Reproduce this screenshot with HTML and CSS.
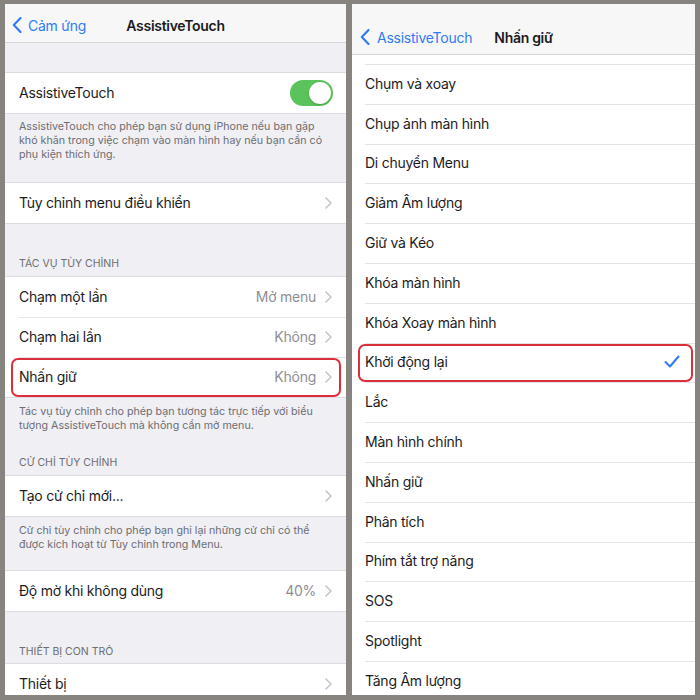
FILE: index.html
```html
<!DOCTYPE html>
<html lang="vi">
<head>
<meta charset="utf-8">
<title>AssistiveTouch</title>
<link rel="stylesheet" href="styles.css">
</head>
<body>
<div class="frame">
  <section class="panel left">
    <header class="nav nav-left">
      <div class="back">
        <svg class="back-chev" width="10" height="16" viewBox="0 0 10 16"><path d="M8.5 1 L1.8 8 L8.5 15" fill="none" stroke="#2f7bf5" stroke-width="2.1" stroke-linecap="round" stroke-linejoin="round"/></svg>
        <span>Cảm ứng</span>
      </div>
      <div class="title">AssistiveTouch</div>
      <div></div>
    </header>
    <div class="gap-top"></div>
    <div class="group">
      <div class="row"><div class="row-inner">
        <span class="label">AssistiveTouch</span>
        <span class="toggle"><span class="knob"></span></span>
      </div></div>
    </div>
    <div class="footer f1">AssistiveTouch cho phép bạn sử dụng iPhone nếu bạn gặp khó khăn trong việc chạm vào màn hình hay nếu bạn cần có phụ kiện thích ứng.</div>
    <div class="group">
      <div class="row"><div class="row-inner">
        <span class="label">Tùy chỉnh menu điều khiển</span>
        <svg class="chev" width="7" height="12" viewBox="0 0 7 12"><path d="M1 1 L6 6 L1 11" fill="none" stroke="#c4c4c8" stroke-width="1.5" stroke-linecap="round" stroke-linejoin="round"/></svg>
      </div></div>
    </div>
    <div class="header h1">TÁC VỤ TÙY CHỈNH</div>
    <div class="group">
      <div class="row"><div class="row-inner">
        <span class="label">Chạm một lần</span>
        <span class="value">Mở menu</span>
        <svg class="chev" width="7" height="12" viewBox="0 0 7 12"><path d="M1 1 L6 6 L1 11" fill="none" stroke="#c4c4c8" stroke-width="1.5" stroke-linecap="round" stroke-linejoin="round"/></svg>
      </div></div>
      <div class="row"><div class="row-inner">
        <span class="label">Chạm hai lần</span>
        <span class="value">Không</span>
        <svg class="chev" width="7" height="12" viewBox="0 0 7 12"><path d="M1 1 L6 6 L1 11" fill="none" stroke="#c4c4c8" stroke-width="1.5" stroke-linecap="round" stroke-linejoin="round"/></svg>
      </div></div>
      <div class="row marked mark-left"><div class="row-inner">
        <span class="label">Nhấn giữ</span>
        <span class="value">Không</span>
        <svg class="chev" width="7" height="12" viewBox="0 0 7 12"><path d="M1 1 L6 6 L1 11" fill="none" stroke="#c4c4c8" stroke-width="1.5" stroke-linecap="round" stroke-linejoin="round"/></svg>
      </div></div>
    </div>
    <div class="footer f2">Tác vụ tùy chỉnh cho phép bạn tương tác trực tiếp với biểu tượng AssistiveTouch mà không cần mở menu.</div>
    <div class="header h2">CỬ CHỈ TÙY CHỈNH</div>
    <div class="group">
      <div class="row"><div class="row-inner">
        <span class="label">Tạo cử chỉ mới...</span>
        <svg class="chev" width="7" height="12" viewBox="0 0 7 12"><path d="M1 1 L6 6 L1 11" fill="none" stroke="#c4c4c8" stroke-width="1.5" stroke-linecap="round" stroke-linejoin="round"/></svg>
      </div></div>
    </div>
    <div class="footer f3">Cử chỉ tùy chỉnh cho phép bạn ghi lại những cử chỉ có thể được kích hoạt từ Tùy chỉnh trong Menu.</div>
    <div class="group">
      <div class="row"><div class="row-inner">
        <span class="label">Độ mờ khi không dùng</span>
        <span class="value">40%</span>
        <svg class="chev" width="7" height="12" viewBox="0 0 7 12"><path d="M1 1 L6 6 L1 11" fill="none" stroke="#c4c4c8" stroke-width="1.5" stroke-linecap="round" stroke-linejoin="round"/></svg>
      </div></div>
    </div>
    <div class="header h3">THIẾT BỊ CON TRỎ</div>
    <div class="group">
      <div class="row"><div class="row-inner">
        <span class="label">Thiết bị</span>
        <svg class="chev" width="7" height="12" viewBox="0 0 7 12"><path d="M1 1 L6 6 L1 11" fill="none" stroke="#c4c4c8" stroke-width="1.5" stroke-linecap="round" stroke-linejoin="round"/></svg>
      </div></div>
    </div>
  </section>

  <section class="panel right">
    <header class="nav nav-right">
      <div class="back">
        <svg class="back-chev" width="10" height="16" viewBox="0 0 10 16"><path d="M8.5 1 L1.8 8 L8.5 15" fill="none" stroke="#2f7bf5" stroke-width="2.1" stroke-linecap="round" stroke-linejoin="round"/></svg>
        <span>AssistiveTouch</span>
      </div>
      <div class="title">Nhấn giữ</div>
      <div></div>
    </header>
    <div class="list">
      <div class="item partial"><div class="item-inner"></div></div>
      <div class="item"><div class="item-inner">Chụm và xoay</div></div>
      <div class="item"><div class="item-inner">Chụp ảnh màn hình</div></div>
      <div class="item"><div class="item-inner">Di chuyển Menu</div></div>
      <div class="item"><div class="item-inner">Giảm Âm lượng</div></div>
      <div class="item"><div class="item-inner">Giữ và Kéo</div></div>
      <div class="item"><div class="item-inner">Khóa màn hình</div></div>
      <div class="item"><div class="item-inner">Khóa Xoay màn hình</div></div>
      <div class="item marked mark-right"><div class="item-inner"><span class="grow">Khởi động lại</span>
        <svg class="check" width="16" height="13" viewBox="0 0 16 13"><path d="M1.5 7 L6 11.5 L14.5 1.5" fill="none" stroke="#2f7bf5" stroke-width="2" stroke-linecap="round" stroke-linejoin="round"/></svg></div></div>
      <div class="item"><div class="item-inner">Lắc</div></div>
      <div class="item"><div class="item-inner">Màn hình chính</div></div>
      <div class="item"><div class="item-inner">Nhấn giữ</div></div>
      <div class="item"><div class="item-inner">Phân tích</div></div>
      <div class="item"><div class="item-inner">Phím tắt trợ năng</div></div>
      <div class="item"><div class="item-inner">SOS</div></div>
      <div class="item"><div class="item-inner">Spotlight</div></div>
      <div class="item"><div class="item-inner">Tăng Âm lượng</div></div>
    </div>
  </section>
</div>
</body>
</html>
```
FILE: styles.css
```css
* { box-sizing: border-box; }
html, body { margin: 0; padding: 0; }
body {
  width: 700px;
  height: 700px;
  background: #878480;
  font-family: Inter, "Noto Sans", "Liberation Sans", sans-serif;
  color: #1c1c1e;
  overflow: hidden;
}
.frame {
  display: flex;
  gap: 6px;
  padding: 4px 5px 5px 5px;
  height: 700px;
}
.panel {
  height: 691px;
  overflow: hidden;
  background: #efeff4;
  display: flex;
  flex-direction: column;
}
.panel.left { width: 341px; }
.panel.right { width: 343px; background: #ffffff; }

.nav {
  display: grid;
  grid-template-columns: 1fr auto 1fr;
  align-items: center;
  background: #f7f7f8;
  border-bottom: 1px solid #d6d6da;
  flex: none;
}
.nav-left { height: 39px; padding-top: 4px; }
.nav-right { height: 51px; padding-top: 16px; }
.back {
  display: flex;
  align-items: center;
  color: #2f7bf5;
  font-size: 14px;
  letter-spacing: -0.25px;
  white-space: nowrap;
}
.nav-left .back { padding-left: 7px; gap: 6px; }
.nav-right .back { padding-left: 8px; gap: 7px; }
.title {
  font-weight: 600;
  font-size: 14px;
  letter-spacing: -0.3px;
  text-align: center;
  white-space: nowrap;
}

.gap-top { height: 30px; flex: none; }

.group {
  background: #ffffff;
  box-shadow: 0 -1px 0 #dcdce0, 0 1px 0 #dcdce0;
  flex: none;
}
.row { padding-left: 14px; position: relative; }
.row-inner {
  height: 40px;
  display: flex;
  align-items: center;
  padding-right: 14px;
  padding-bottom: 2px;
  border-top: 1px solid #e4e4e8;
  font-size: 14px;
  letter-spacing: -0.25px;
  white-space: nowrap;
}
.row:first-child .row-inner { border-top: none; padding-bottom: 1px; }
.label { flex: 1; }
.value { color: #8e8e93; margin-right: 9px; }
.chev { flex: none; }

.toggle {
  width: 43px;
  height: 26px;
  border-radius: 13px;
  background: #5bc35b;
  position: relative;
  margin-right: -1px;
}
.knob {
  position: absolute;
  top: 2px;
  right: 2px;
  width: 22px;
  height: 22px;
  border-radius: 50%;
  background: #fff;
  box-shadow: 0 1px 2px rgba(0,0,0,0.2);
}

.footer {
  flex: none;
  font-size: 10.7px;
  line-height: 14px;
  color: #6d6d72;
  padding: 7px 14px 0 14px;
}
.f1 { height: 70px; }
.f2 { height: 53px; padding-top: 8px; }
.f3 { height: 55px; padding-top: 8px; }

.header {
  flex: none;
  font-size: 10.5px;
  line-height: 14px;
  color: #6d6d72;
  padding-left: 14px;
}
.h1 { height: 54px; padding-top: 34px; }
.h2 { height: 26px; padding-top: 6px; }
.h3 { height: 53px; padding-top: 34px; }

.marked::after {
  content: "";
  position: absolute;
  border: 2px solid #dc2f3b;
  border-radius: 7px;
  pointer-events: none;
}
.mark-left::after { left: 6px; right: 5px; top: 1px; bottom: 0; }

.list { flex: none; }
.item { padding-left: 13px; position: relative; }
.item-inner {
  height: 39.8px;
  display: flex;
  align-items: center;
  border-top: 1px solid #e4e4e8;
  padding-bottom: 2px;
  font-size: 14px;
  letter-spacing: -0.25px;
  padding-right: 15px;
  white-space: nowrap;
}
.item:first-child .item-inner { border-top: none; }
.item.partial .item-inner { height: 9px; padding-bottom: 0; }
.grow { flex: 1; }
.mark-right::after { left: 6px; right: 2px; top: 1.5px; bottom: 0.5px; }
```
